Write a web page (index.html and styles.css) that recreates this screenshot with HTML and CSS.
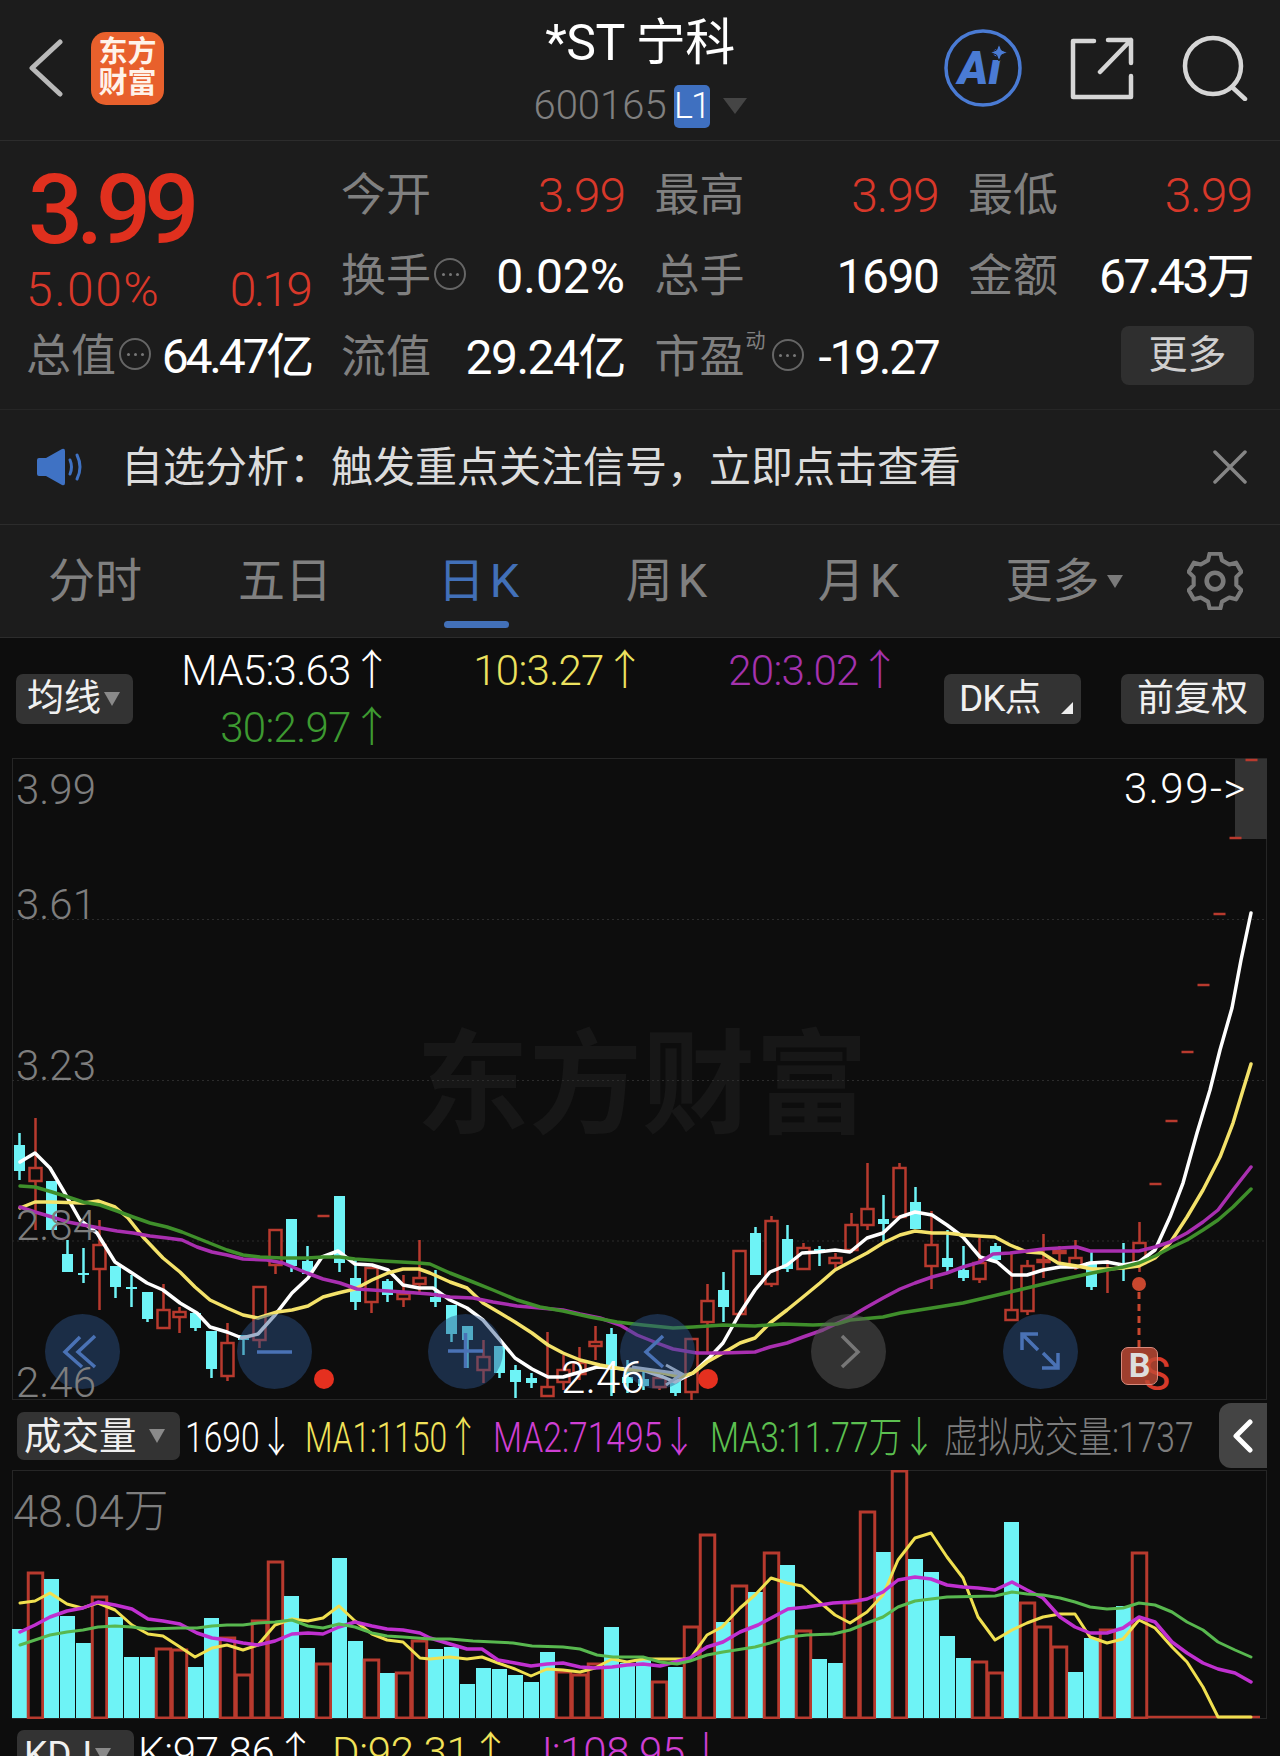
FILE: index.html
```html
<!doctype html>
<html lang="zh-CN">
<head>
    <meta charset="utf-8">
    <meta name="viewport" content="width=device-width, initial-scale=1">
    <title>*ST 宁科 - 日K</title>
    <link rel="stylesheet" href="styles.css">
</head>
<body>
<div class="page">

    <!-- Шапка -->
    <header class="top-bar">
        <div class="top-left">
            <svg class="icon-back" width="34" height="58" viewBox="0 0 34 58"><path d="M31 3 3 29l28 26" fill="none" stroke="#b9b9b9" stroke-width="5" stroke-linecap="round" stroke-linejoin="round"/></svg>
            <div class="logo">东方<br>财富</div>
        </div>
        <div class="top-title">
            <div class="stock-name">*ST 宁科</div>
            <div class="stock-code">600165<span class="badge-l1">L1</span><span class="code-caret"></span></div>
        </div>
        <div class="top-right">
            <svg class="icon-ai" width="78" height="80" viewBox="0 0 78 80">
                <circle cx="39" cy="40" r="37" fill="none" stroke="#4a7bd4" stroke-width="3.5"/>
                <text x="14" y="56" class="ai-text">Ai</text>
                <path d="M55 16l2.500 6 6 2.500-6 2.500-2.500 6-2.500-6-6-2.500 6-2.500z" fill="#4a7bd4" stroke="#1c1c1c" stroke-width="1"/>
            </svg>
            <svg class="icon-share" width="64" height="64" viewBox="0 0 64 64" fill="none" stroke="#d6d6d6" stroke-width="4.500" stroke-linecap="round" stroke-linejoin="round">
                <path d="M24 5H3v56h58V40"/>
                <path d="M30 36 61 4M38 4h23v23"/>
            </svg>
            <svg class="icon-search" width="66" height="66" viewBox="0 0 66 66" fill="none" stroke="#d6d6d6" stroke-width="4.500" stroke-linecap="round">
                <circle cx="31" cy="31" r="28"/>
                <path d="M50 52l13 12"/>
            </svg>
        </div>
    </header>

    <!-- Котировка -->
    <section class="quote">
        <div class="quote-main">
            <div class="price">3.99</div>
            <div class="price-change"><span class="pct">5.00%</span><span class="chg">0.19</span></div>
            <div class="quote-cell">
                <span class="label">总值<i class="info-dot"></i></span><span class="value light tight">64.47亿</span>
            </div>
        </div>
        <div class="quote-grid">
            <div class="quote-cell"><span class="label">今开</span><span class="value red">3.99</span></div>
            <div class="quote-cell"><span class="label">最高</span><span class="value red">3.99</span></div>
            <div class="quote-cell"><span class="label">最低</span><span class="value red">3.99</span></div>
            <div class="quote-cell"><span class="label">换手<i class="info-dot"></i></span><span class="value light wide">0.02%</span></div>
            <div class="quote-cell"><span class="label">总手</span><span class="value light">1690</span></div>
            <div class="quote-cell"><span class="label">金额</span><span class="value light tight">67.43万</span></div>
            <div class="quote-cell"><span class="label">流值</span><span class="value light">29.24亿</span></div>
            <div class="quote-cell"><span class="label">市盈<sup class="label-sup">动</sup><i class="info-dot"></i></span><span class="value light narrow">-19.27</span></div>
            <div class="quote-cell quote-more"><button class="more-btn">更多</button></div>
        </div>
    </section>

    <!-- Уведомление -->
    <section class="notice">
        <svg class="icon-speaker" width="48" height="38" viewBox="0 0 48 38">
            <path d="M0 12q0-2 2-2h7L25 1q3-1 3 2v32q0 3-3 2L9 28H2q-2 0-2-2z" fill="#3f72c4"/>
            <path d="M33 12q3 7 0 14M40 7q6 12 0 24" fill="none" stroke="#3f72c4" stroke-width="3" stroke-linecap="round"/>
        </svg>
        <span class="notice-text">自选分析&#xFF1A;触发重点关注信号&#xFF0C;立即点击查看</span>
        <svg class="icon-close" width="34" height="34" viewBox="0 0 34 34"><path d="M2 2l30 30M32 2 2 32" stroke="#858585" stroke-width="3.500" stroke-linecap="round"/></svg>
    </section>

    <!-- Вкладки периодов -->
    <nav class="tabs">
        <span class="tab">分时</span>
        <span class="tab">五日</span>
        <span class="tab tab-k tab-active">日K</span>
        <span class="tab tab-k">周K</span>
        <span class="tab tab-k">月K</span>
        <span class="tab">更多<i class="tab-caret"></i></span>
        <svg class="icon-gear" width="56" height="58" viewBox="0 0 54 56">
            <path d="M21.800 1.500h10.400l1.600 6.600 7 4 6.600-1.800 5.100 8.900-4.900 4.800v8l4.900 4.800-5.100 8.900-6.600-1.800-7 4-1.600 6.600H21.800l-1.600-6.600-7-4-6.600 1.800-5.100-8.900 4.900-4.800v-8l-4.900-4.800 5.100-8.900 6.600 1.800 7-4z" fill="none" stroke="#7a7a7a" stroke-width="4" stroke-linejoin="round"/>
            <circle cx="27" cy="28" r="8" fill="none" stroke="#7a7a7a" stroke-width="4.500"/>
        </svg>
    </nav>

    <section class="chart-area">
        <!-- Легенда скользящих средних -->
        <div class="ma-bar">
            <div class="ma-left"><span class="chip">均线<i class="chip-caret"></i></span></div>
            <span class="ma-item c-white">MA5:3.63↑</span>
            <span class="ma-item c-yellow">10:3.27↑</span>
            <span class="ma-item c-purple">20:3.02↑</span>
            <div class="ma-right">
                <span class="chip chip-dk">DK点<i class="chip-corner"></i></span>
                <span class="chip chip-adj">前复权</span>
            </div>
            <span class="ma-item c-green">30:2.97↑</span>
        </div>

        <!-- Свечной график -->
        <div class="chart-box chart-main">
            <div class="watermark">东方财富</div>
            <div class="limit-box"></div>
            <svg id="candles" class="chart-svg" viewBox="12 758 1255 642"></svg>
            <div class="zoom-bar">
                <span class="zoom-btn"><svg width="75" height="75" viewBox="0 0 75 75"><path d="M35 23 20 38l17 15M50 22 33 38l17 15"/></svg></span>
                <span class="zoom-btn"><svg width="75" height="75" viewBox="0 0 75 75"><path d="M20 38h35"/></svg></span>
                <span class="zoom-btn"><svg width="75" height="75" viewBox="0 0 75 75"><path d="M20 37h35M37.500 19v35"/></svg></span>
                <span class="zoom-btn"><svg width="75" height="75" viewBox="0 0 75 75"><path d="M43 22 26 38l17 15"/></svg></span>
                <span class="zoom-btn zoom-off"><svg width="75" height="75" viewBox="0 0 75 75"><path d="M31 22l16 16-16 15"/></svg></span>
                <span class="zoom-btn"><svg width="75" height="75" viewBox="0 0 75 75"><path d="M35 36 19 20M19 36V20h16M40 39l15 15M39 54h16V39"/></svg></span>
            </div>
            <span class="axis-label axis-top">3.99</span>
            <span class="axis-label axis-361">3.61</span>
            <span class="axis-label axis-323">3.23</span>
            <span class="axis-label axis-284">2.84</span>
            <span class="axis-label axis-246">2.46</span>
            <span class="price-flag flag-high">3.99-&gt;</span>
            <span class="price-flag flag-low">2.46</span>
            <span class="signal-s">S</span>
            <span class="signal-b">B</span>
        </div>

        <!-- Объём -->
        <div class="indicator-bar">
            <span class="chip chip-vol">成交量<i class="chip-caret"></i></span>
            <span class="ind-item c-white">1690↓</span>
            <span class="ind-item c-yellow2 squeeze">MA1:1150↑</span>
            <span class="ind-item c-pink">MA2:71495↓</span>
            <span class="ind-item c-green2">MA3:11.77万↓</span>
            <span class="ind-item c-gray">虚拟成交量:1737</span>
            <span class="collapse-tab"><svg width="22" height="34" viewBox="0 0 22 34"><path d="M18 3 4 17l14 14" fill="none" stroke="#fff" stroke-width="5" stroke-linecap="round" stroke-linejoin="round"/></svg></span>
        </div>
        <div class="chart-box chart-volume">
            <svg id="volume" class="chart-svg" viewBox="12 1470 1255 249"></svg>
            <span class="axis-label axis-vol">48.04万</span>
        </div>

        <!-- KDJ, срезан краем экрана -->
        <div class="kdj-bar">
            <span class="chip chip-kdj">KDJ<i class="chip-caret"></i></span>
            <span class="kdj-item c-white">K:97.86↑</span>
            <span class="kdj-item c-yellow2">D:92.31↑</span>
            <span class="kdj-item c-pink">J:108.95↓</span>
        </div>
    </section>
</div>
<script src="charts.js"></script>
</body>
</html>
```
FILE: styles.css
```css
/* Общие настройки */
:root {
    --panel-bg: #1c1c1c;
    --chart-bg: #0d0d0d;
    --line: #2c2c2c;
    --gray-text: #808080;
    --red: #d8382a;
    --blue: #4270b8;
}

* {
    box-sizing: border-box;
}

html, body {
    margin: 0;
    padding: 0;
    background: var(--chart-bg);
}

body {
    font-family: Roboto, "Noto Sans CJK SC", sans-serif;
    color: #fff;
}

.page {
    width: 1280px;
    height: 1756px;
    overflow: hidden;
}

/* Шапка */
.top-bar {
    height: 141px;
    display: grid;
    grid-template-columns: 1fr auto 1fr;
    align-items: center;
    background: var(--panel-bg);
    border-bottom: 1px solid var(--line);
}

.top-left {
    display: flex;
    align-items: center;
    gap: 28px;
    padding-left: 29px;
    margin-top: -4px;
}

.logo {
    width: 73px;
    height: 73px;
    padding-top: 5px;
    border-radius: 15px;
    background: #e8602c;
    color: #fff3ea;
    font-size: 29px;
    font-weight: 700;
    line-height: 31px;
    text-align: center;
}

.top-title {
    padding-top: 7px;
    text-align: center;
}

.stock-name {
    font-size: 50px;
    line-height: 56px;
    letter-spacing: -0.5px;
    margin-top: -4px;
}

.stock-code {
    display: flex;
    align-items: center;
    justify-content: center;
    height: 44px;
    margin-top: 13px;
    font-size: 40px;
    font-weight: 300;
    line-height: 44px;
    color: var(--gray-text);
}

.badge-l1 {
    width: 36px;
    height: 43px;
    margin-left: 7px;
    border-radius: 5px;
    background: #3f70c0;
    color: #fff;
    font-size: 36px;
    font-weight: 300;
    line-height: 43px;
    letter-spacing: -2px;
    text-align: center;
}

.code-caret {
    width: 0;
    height: 0;
    margin-left: 13px;
    border-left: 12px solid transparent;
    border-right: 12px solid transparent;
    border-top: 16px solid #454545;
}

.top-right {
    display: flex;
    align-items: center;
    justify-content: flex-end;
    padding-right: 32px;
    margin-top: -5px;
}

.ai-text {
    font-family: Roboto, sans-serif;
    font-size: 46px;
    font-weight: 900;
    font-style: italic;
    fill: #4a7bd4;
}

.icon-share {
    margin-left: 48px;
}

.icon-search {
    margin-left: 48px;
}

/* Котировка */
.quote {
    height: 269px;
    display: flex;
    padding: 22px 0 0 26px;
    background: var(--panel-bg);
    border-bottom: 1px solid #262626;
}

.quote-main {
    width: 284px;
    margin-right: 31px;
}

.price {
    height: 92px;
    margin: 1px 0 0 2px;
    color: #e0301e;
    font-size: 97px;
    font-weight: 500;
    line-height: 92px;
    letter-spacing: -7px;
}

.price-change {
    display: flex;
    justify-content: space-between;
    height: 66px;
    margin: 1px 0 0 0;
    color: var(--red);
    font-size: 48px;
    font-weight: 300;
    line-height: 66px;
}

.pct {
    letter-spacing: 1.500px;
}

.chg {
    letter-spacing: -2.800px;
}

.quote-grid {
    display: grid;
    grid-template-columns: repeat(3, 284px);
    grid-auto-rows: 81px;
    column-gap: 29.500px;
    margin-top: -8px;
}

.quote-cell {
    display: flex;
    align-items: center;
    justify-content: space-between;
    height: 81px;
}

.quote-main .quote-cell {
    margin-top: -7px;
}

.label {
    position: relative;
    display: flex;
    align-items: center;
    color: var(--gray-text);
    font-size: 45px;
    line-height: 56px;
    white-space: nowrap;
}

.label-sup {
    align-self: flex-start;
    margin: -2px 3px 0 1px;
    font-size: 20px;
    line-height: 26px;
}

.info-dot {
    position: relative;
    display: inline-block;
    width: 32px;
    height: 32px;
    margin: -5px 0 0 3px;
    border: 2px solid #666;
    border-radius: 50%;
}

.info-dot::after {
    content: "";
    position: absolute;
    left: 12.500px;
    top: 12.500px;
    width: 3px;
    height: 3px;
    border-radius: 50%;
    background: #777;
    box-shadow: -7px 0 0 #777, 7px 0 0 #777;
}

.value {
    font-size: 48px;
    font-weight: 300;
    line-height: 56px;
    letter-spacing: -1.500px;
    white-space: nowrap;
}

.value.red {
    color: var(--red);
    letter-spacing: -1px;
}

.value.light {
    color: #fff;
    font-weight: 400;
}

.value.tight {
    letter-spacing: -2.600px;
}

.value.narrow {
    letter-spacing: -2.300px;
}

.value.wide {
    letter-spacing: 0;
}

.quote-main .value.tight {
    letter-spacing: -3.200px;
    margin-right: -1px;
}

.quote-more {
    justify-content: flex-end;
}

.more-btn {
    width: 133px;
    height: 59px;
    margin: -4px -2px 0 0;
    padding: 0;
    border: 0;
    border-radius: 8px;
    background: #2f2f2f;
    color: #cfcfcf;
    font-family: inherit;
    font-size: 39px;
    line-height: 59px;
}

/* Уведомление */
.notice {
    height: 115px;
    display: flex;
    align-items: center;
    padding: 0 33px 0 37px;
    background: var(--panel-bg);
    border-bottom: 1px solid var(--line);
}

.notice-text {
    flex: 1;
    margin: 2px 0 0 36px;
    color: #dcdcdc;
    font-size: 42px;
    line-height: 56px;
    white-space: nowrap;
}

/* Вкладки */
.tabs {
    height: 113px;
    display: grid;
    grid-template-columns: 190px 190px 202px 174px 210px 196px auto;
    align-items: center;
    background: var(--panel-bg);
    border-bottom: 1px solid var(--line);
}

.tab {
    position: relative;
    display: flex;
    align-items: center;
    justify-content: center;
    height: 60px;
    color: var(--gray-text);
    font-size: 47px;
    line-height: 60px;
}

.tab-k {
    letter-spacing: 5px;
}

.tab-active {
    color: var(--blue);
}

.tab-active::after {
    content: "";
    position: absolute;
    left: 64px;
    bottom: -17px;
    width: 65px;
    height: 7px;
    border-radius: 4px;
    background: var(--blue);
}

.tab-caret {
    width: 0;
    height: 0;
    margin: 0 0 0 7px;
    border-left: 8px solid transparent;
    border-right: 8px solid transparent;
    border-top: 13px solid #7a7a7a;
}

.icon-gear {
    margin: 0 0 0 25px;
}

/* График: легенда */
.chart-area {
    background: var(--chart-bg);
}

.ma-bar {
    height: 120px;
    padding-top: 4px;
    display: grid;
    grid-template-columns: 132px 260px 253px 255px 1fr;
    grid-template-rows: 57px 57px;
    align-items: center;
}

.ma-left {
    grid-row: span 2;
    padding-left: 16px;
}

.ma-right {
    grid-row: span 2;
    grid-column: 5;
    display: flex;
    justify-content: flex-end;
    gap: 40px;
    padding-right: 16px;
}

.ma-item {
    font-size: 42px;
    font-weight: 300;
    line-height: 50px;
    letter-spacing: -0.700px;
    text-align: right;
    white-space: nowrap;
}

.c-white { color: #fff; }
.c-yellow { color: #ece25f; }
.c-purple { color: #a432ad; }
.c-green { color: #3d9a31; grid-column: 2; grid-row: 2; }
.c-yellow2 { color: #f2e35a; }
.c-pink { color: #cf3fd3; }
.c-green2 { color: #5cc050; }
.c-gray { color: #7d7d7d; }

.chip {
    position: relative;
    display: inline-flex;
    align-items: center;
    height: 50px;
    padding: 0 0 0 11px;
    border-radius: 7px;
    background: #333;
    color: #f0f0f0;
    font-size: 37px;
    line-height: 50px;
    white-space: nowrap;
}

.ma-left .chip {
    width: 117px;
}

.chip-caret {
    width: 0;
    height: 0;
    margin-left: 3px;
    border-left: 8px solid transparent;
    border-right: 8px solid transparent;
    border-top: 14px solid #8a8a8a;
}

.chip-dk {
    width: 137px;
    padding-left: 15px;
    letter-spacing: -1px;
}

.chip-corner {
    position: absolute;
    right: 8px;
    bottom: 10px;
    width: 0;
    height: 0;
    border-left: 12px solid transparent;
    border-bottom: 12px solid #eee;
}

.chip-adj {
    width: 143px;
    justify-content: center;
    padding: 0;
}

/* График: холсты */
.chart-box {
    position: relative;
    width: 1255px;
    margin-left: 12px;
    box-shadow: inset 0 0 0 1px #262626;
}

.chart-main {
    height: 642px;
}

.chart-volume {
    height: 249px;
}

.chart-svg {
    position: absolute;
    inset: 0;
    width: 100%;
    height: 100%;
    display: block;
}

.watermark {
    position: absolute;
    left: 404px;
    top: 268px;
    color: #171717;
    font-size: 113px;
    font-weight: 700;
    line-height: 120px;
    white-space: nowrap;
}

.limit-box {
    position: absolute;
    right: 0;
    top: 1px;
    width: 32px;
    height: 80px;
    background: #333;
}

.axis-label {
    position: absolute;
    left: 4px;
    color: #7e7e7e;
    font-size: 42px;
    font-weight: 300;
    line-height: 42px;
}

.axis-top { top: 11px; }
.axis-361 { top: 126px; }
.axis-323 { top: 287px; }
.axis-284 { top: 447px; }
.axis-246 { top: 604px; }

.axis-vol {
    left: 1px;
    top: 20px;
    font-size: 45px;
    line-height: 44px;
}

.price-flag {
    position: absolute;
    color: #fff;
    font-size: 42px;
    font-weight: 300;
    line-height: 42px;
}

.flag-high {
    left: 1112px;
    top: 10px;
    letter-spacing: 1.500px;
}

.flag-low {
    left: 549px;
    top: 599px;
    font-size: 44px;
}

/* Кнопки поверх графика */
.zoom-bar {
    position: absolute;
    left: 33px;
    top: 556px;
    display: flex;
    gap: 116.600px;
}

.zoom-btn {
    width: 75px;
    height: 75px;
    border-radius: 50%;
    background: rgba(45, 85, 140, 0.45);
}

.zoom-btn svg {
    display: block;
    fill: none;
    stroke: #4a72b5;
    stroke-width: 3.500;
}

.zoom-off {
    background: rgba(90, 90, 90, 0.5);
}

.zoom-off svg {
    stroke: #777;
}

/* Метки сигналов */
.signal-s {
    position: absolute;
    left: 1131px;
    top: 594px;
    color: #d63a2a;
    font-size: 46px;
    line-height: 44px;
}

.signal-b {
    position: absolute;
    left: 1109px;
    top: 589px;
    width: 37px;
    height: 38px;
    border: 1.500px solid #d98a7c;
    border-radius: 7px;
    background: rgba(192, 74, 54, 0.82);
    color: #ddd;
    font-size: 34px;
    font-weight: 700;
    line-height: 35px;
    text-align: center;
}

/* Строки индикаторов */
.indicator-bar {
    position: relative;
    height: 70px;
    display: grid;
    grid-template-columns: 168px 120px 188px 217px 234px 1fr;
    align-items: center;
    padding-left: 17px;
}

.ind-item {
    margin-top: 5px;
    font-size: 42px;
    font-weight: 300;
    line-height: 50px;
    white-space: nowrap;
    /* Цифры в этой строке заметно уже обычных */
    transform: scaleX(0.8);
    transform-origin: left center;
}

.ind-item.squeeze {
    transform: scaleX(0.755);
}

.chip-vol {
    width: 163px;
    height: 48px;
    margin-top: 1px;
    padding-left: 7px;
    font-size: 37.500px;
}

.chip-vol .chip-caret {
    margin-left: 12px;
}

.collapse-tab {
    position: absolute;
    left: 1219px;
    top: 3px;
    width: 48px;
    height: 65px;
    display: flex;
    align-items: center;
    justify-content: center;
    border-radius: 12px 0 0 12px;
    background: #444;
}

.kdj-bar {
    display: grid;
    grid-template-columns: 121px 194px 197px 1fr;
    align-items: start;
    height: 37px;
    margin-top: 11px;
    padding-left: 17px;
    overflow: hidden;
}

.chip-kdj {
    width: 117px;
    padding-left: 7px;
}

.kdj-item {
    font-size: 42px;
    font-weight: 300;
    line-height: 50px;
    letter-spacing: -0.300px;
    white-space: nowrap;
    margin-top: -2px;
}
```
FILE: charts.js
```js
// Рисуем свечи и объём в координатах страницы
var NS = 'http://www.w3.org/2000/svg';
var RED = '#b83a2e';
var CYAN = '#6ef3f6';

function cx(i) {
    return 19.5 + 16 * i;
}

function add(svg, tag, attrs) {
    var el = document.createElementNS(NS, tag);
    for (var k in attrs) el.setAttribute(k, attrs[k]);
    svg.appendChild(el);
    return el;
}

function line(svg, pts, color, width) {
    add(svg, 'polyline', {
        points: pts.join(' '),
        fill: 'none',
        stroke: color,
        'stroke-width': width,
        'stroke-linejoin': 'round',
        'stroke-linecap': 'round'
    });
}

// [1 = красная, верх тени, верх тела, низ тела, низ тени]
var candles = [
    [0,1133,1145,1171,1180],[1,1118,1168,1181,1230],[0,1181,1181,1230,1230],[0,1240,1254,1272,1272],
    [0,1248,1273,1275,1283],[1,1220,1245,1269,1310],[0,1266,1266,1287,1298],[0,1275,1287,1289,1307],
    [0,1292,1292,1319,1322],[1,1284,1310,1328,1328],[1,1307,1312,1317,1333],[0,1312,1313,1328,1331],
    [0,1331,1331,1369,1378],[1,1323,1343,1376,1381],[0,1335,1335,1340,1355],[1,1287,1287,1340,1348],
    [1,1230,1230,1265,1274],[0,1219,1219,1266,1272],[0,1246,1261,1274,1274],[1,1216,1216,1216,1216],
    [0,1196,1196,1263,1272],[0,1258,1278,1302,1310],[1,1268,1268,1302,1313],[0,1279,1281,1295,1302],
    [1,1275,1294,1299,1307],[1,1240,1278,1284,1293],[0,1270,1297,1302,1307],[0,1305,1305,1334,1342],
    [0,1326,1326,1340,1368],[1,1340,1357,1370,1383],[0,1346,1346,1373,1378],[0,1365,1370,1382,1398],
    [0,1373,1378,1383,1388],[1,1332,1387,1396,1396],[1,1355,1370,1382,1390],[1,1347,1363,1374,1380],
    [1,1326,1342,1346,1360],[0,1328,1334,1367,1396],[0,1360,1377,1383,1393],[0,1370,1379,1386,1390],
    [1,1377,1378,1387,1390],[0,1373,1380,1393,1396],[1,1339,1339,1392,1402],[1,1284,1301,1322,1353],
    [0,1272,1290,1307,1322],[1,1251,1251,1314,1314],[0,1227,1233,1275,1275],[1,1216,1221,1284,1287],
    [0,1225,1239,1269,1272],[1,1243,1248,1269,1269],[0,1246,1249,1253,1266],[1,1253,1258,1263,1270],
    [1,1213,1225,1250,1253],[1,1163,1209,1225,1230],[0,1195,1219,1224,1242],[1,1163,1168,1217,1217],
    [0,1187,1202,1229,1229],[1,1211,1245,1266,1289],[0,1230,1258,1267,1272],[0,1246,1270,1278,1281],
    [1,1238,1263,1279,1283],[0,1243,1246,1260,1260],[1,1253,1310,1320,1320],[1,1260,1266,1311,1315],
    [1,1234,1260,1262,1278],[1,1246,1251,1253,1262],[1,1240,1258,1267,1270],[0,1252,1262,1287,1290],
    [1,1260,1262,1262,1293],[0,1243,1264,1266,1281],[1,1222,1243,1263,1272],[1,1184,1184,1184,1184],
    [1,1121,1121,1121,1121],[1,1052,1052,1052,1052],[1,985,985,985,985],[1,914,914,914,914],
    [1,838,838,838,838],[1,760,760,760,760]
];

var ma5 = ['20,1162','35,1153','50,1168','63,1190','80,1220','97,1233','115,1262','132,1273','147,1283','163,1290','180,1303','197,1313','210,1327','227,1332','242,1338','258,1334','275,1315','292,1293','308,1278','322,1257','338,1251','355,1264','372,1265','388,1270','403,1285','419,1288','433,1288','450,1300','467,1308','483,1320','500,1340','515,1358','532,1369','548,1377','563,1377','597,1367','643,1370','663,1377','675,1382','693,1373','710,1357','723,1343','740,1313','755,1290','770,1272','787,1265','802,1253','818,1252','835,1250','850,1252','867,1238','883,1233','900,1217','915,1212','932,1215','947,1225','963,1237','980,1257','997,1262','1012,1275','1027,1275','1043,1270','1060,1267','1077,1267','1090,1263','1107,1262','1123,1265','1139,1262','1155,1250','1170,1217','1183,1183','1197,1133','1210,1090','1220,1050','1232,1008','1241,960','1251,913'];
var ma10 = ['20,1208','35,1202','50,1202','83,1203','98,1201','115,1207','128,1218','143,1237','163,1258','180,1272','195,1287','210,1300','227,1308','243,1315','258,1318','277,1312','292,1310','308,1306','323,1297','338,1293','355,1289','372,1280','388,1273','403,1269','419,1269','430,1273','450,1282','467,1288','483,1303','500,1313','515,1322','532,1333','548,1345','563,1353','580,1360','600,1365','627,1370','643,1370','663,1373','680,1377','693,1373','707,1362','723,1353','740,1343','755,1338','770,1323','787,1310','803,1297','820,1283','835,1270','850,1262','867,1253','883,1243','900,1235','915,1231','932,1233','947,1233','963,1235','978,1236','995,1237','1010,1245','1027,1252','1042,1253','1058,1263','1077,1266','1092,1269','1107,1269','1123,1268','1139,1266','1155,1258','1170,1243','1187,1217','1203,1190','1220,1157','1233,1123','1243,1090','1251,1064'];
var ma20 = ['20,1207','35,1212','52,1217','68,1222','83,1225','100,1228','117,1231','133,1233','150,1236','167,1238','182,1240','197,1247','212,1252','227,1255','243,1259','267,1260','283,1263','307,1273','323,1279','340,1283','357,1289','372,1290','388,1291','403,1292','430,1294','450,1297','473,1298','493,1302','517,1306','540,1308','563,1310','580,1314','600,1318','620,1325','637,1335','657,1343','673,1349','697,1353','723,1353','755,1352','770,1347','787,1343','803,1337','823,1330','840,1322','850,1317','867,1307','883,1298','900,1289','915,1283','932,1277','947,1273','963,1267','980,1262','993,1254','1010,1253','1027,1251','1043,1249','1060,1248','1077,1247','1090,1251','1107,1251','1123,1251','1139,1251','1155,1247','1170,1242','1187,1233','1203,1222','1218,1210','1233,1190','1251,1167'];
var ma30 = ['20,1186','35,1187','52,1192','68,1197','83,1202','100,1205','117,1211','133,1217','150,1223','167,1227','182,1232','197,1238','212,1244','227,1250','243,1255','260,1257','283,1258','307,1258','323,1257','340,1257','355,1259','383,1261','419,1263','430,1264','450,1273','473,1282','493,1290','517,1300','540,1307','563,1311','590,1317','617,1322','643,1325','673,1328','693,1327','723,1325','755,1326','783,1324','813,1325','837,1324','850,1320','883,1317','900,1313','932,1308','963,1303','993,1296','1027,1288','1060,1280','1092,1273','1123,1267','1139,1263','1155,1256','1170,1248','1187,1240','1203,1230','1218,1220','1233,1207','1251,1189'];

function drawCandles() {
    var svg = document.getElementById('candles');
    [919.5, 1080.5, 1241].forEach(function (y) {
        add(svg, 'line', {x1: 12, x2: 1267, y1: y, y2: y, stroke: '#2c2c2c', 'stroke-width': 1, 'stroke-dasharray': '2 3'});
    });
    candles.forEach(function (c, i) {
        var x = cx(i), up = c[0] === 1, color = up ? RED : CYAN;
        if (c[2] === c[3] && c[1] === c[4]) {
            // Цена на лимите: только чёрточка
            add(svg, 'line', {x1: x - 6, x2: x + 6, y1: c[2], y2: c[2], stroke: color, 'stroke-width': 2.5});
        } else if (up) {
            if (c[1] < c[2]) add(svg, 'line', {x1: x, x2: x, y1: c[1], y2: c[2], stroke: color, 'stroke-width': 2.5});
            if (c[4] > c[3]) add(svg, 'line', {x1: x, x2: x, y1: c[3], y2: c[4], stroke: color, 'stroke-width': 2.5});
            add(svg, 'rect', {x: x - 6, y: c[2], width: 12, height: c[3] - c[2], fill: '#0d0d0d', stroke: color, 'stroke-width': 2.5});
        } else {
            add(svg, 'line', {x1: x, x2: x, y1: c[1], y2: c[4], stroke: color, 'stroke-width': 2.5});
            add(svg, 'rect', {x: x - 5.5, y: c[2], width: 11, height: c[3] - c[2], fill: color});
        }
    });
    line(svg, ma5, '#fff', 3.5);
    line(svg, ma10, '#f4e26a', 3.5);
    line(svg, ma20, '#a92fb0', 3.5);
    line(svg, ma30, '#3f8f2b', 3.5);

    // Красные точки и метка покупки
    add(svg, 'circle', {cx: 324, cy: 1379, r: 10, fill: '#e5301f'});
    add(svg, 'circle', {cx: 708, cy: 1379, r: 10, fill: '#e5301f'});
    add(svg, 'circle', {cx: 1139, cy: 1284, r: 7, fill: '#c8472e'});
    add(svg, 'line', {x1: 1139, x2: 1139, y1: 1292, y2: 1347, stroke: '#c8472e', 'stroke-width': 3, 'stroke-dasharray': '7 5'});

    // Стрелка от минимальной цены
    add(svg, 'path', {d: 'M632 1367l50 7M666 1365l16 9-16 11', fill: 'none', stroke: '#d7dbe2', 'stroke-width': 3});
}

// Высоты столбцов объёма: [1 = красный, верх]
var bars = [
    [0,1629],[1,1573],[0,1579],[0,1616],[0,1643],[1,1597],[0,1617],[0,1657],[0,1657],[1,1649],
    [1,1650],[0,1667],[0,1618],[1,1638],[1,1675],[1,1621],[1,1562],[0,1596],[0,1648],[1,1664],
    [0,1558],[0,1641],[1,1660],[0,1673],[1,1673],[1,1641],[0,1649],[0,1647],[0,1684],[0,1668],
    [0,1669],[0,1675],[0,1682],[0,1652],[1,1672],[1,1675],[1,1664],[0,1627],[0,1663],[0,1660],
    [1,1682],[0,1667],[1,1627],[1,1535],[0,1622],[1,1586],[0,1592],[1,1553],[0,1565],[1,1631],
    [0,1659],[0,1663],[1,1603],[1,1512],[0,1552],[1,1471],[0,1559],[0,1572],[0,1636],[0,1658],
    [1,1662],[1,1673],[0,1522],[1,1603],[1,1627],[1,1647],[0,1672],[0,1638],[1,1630],[0,1606],
    [1,1553]
];

var volYellow = ['20,1603','35,1601','50,1593','67,1604','82,1608','98,1603','115,1610','132,1625','148,1634','163,1636','180,1647','195,1657','212,1648','227,1645','243,1650','258,1645','275,1625','292,1619','308,1621','323,1618','339,1606','355,1621','372,1634','387,1640','403,1642','420,1658','430,1659','450,1657','467,1659','482,1657','498,1663','515,1669','531,1676','547,1669','563,1670','580,1672','595,1668','612,1659','627,1662','643,1659','660,1659','690,1659','707,1635','722,1627','740,1608','755,1595','771,1578','787,1583','802,1586','822,1604','835,1615','850,1623','867,1612','883,1595','898,1560','915,1538','931,1533','947,1557','963,1578','978,1617','995,1640','1012,1630','1027,1623','1043,1617','1060,1614','1075,1614','1090,1637','1107,1643','1123,1639','1139,1620','1155,1628','1172,1647','1187,1662','1203,1687','1218,1717','1251,1717'];
var volPink = ['20,1632','35,1625','50,1617','67,1611','83,1608','98,1602','115,1605','132,1609','148,1619','163,1621','180,1624','197,1633','212,1638','227,1640','243,1643','258,1645','275,1641','292,1634','308,1633','323,1634','339,1627','355,1622','372,1626','387,1629','403,1630','420,1633','430,1638','450,1644','467,1649','482,1649','498,1660','515,1663','531,1666','547,1664','563,1663','580,1667','595,1668','612,1667','627,1665','643,1664','660,1666','690,1658','707,1647','723,1642','740,1632','758,1625','773,1617','788,1609','807,1607','833,1603','850,1602','867,1599','883,1592','898,1580','915,1577','931,1579','947,1585','963,1587','978,1588','995,1590','1012,1582','1027,1590','1043,1598','1060,1617','1075,1627','1090,1633','1107,1633','1123,1628','1139,1617','1155,1622','1172,1642','1187,1653','1203,1663','1218,1669','1235,1673','1251,1682'];
var volGreen = ['20,1645','35,1640','50,1635','67,1632','83,1630','98,1627','115,1626','132,1627','148,1629','180,1628','197,1628','212,1626','227,1625','243,1625','258,1623','275,1622','292,1620','308,1626','323,1628','339,1624','355,1627','372,1633','387,1636','403,1637','430,1639','450,1639','473,1641','513,1643','532,1646','563,1647','580,1649','597,1655','613,1657','643,1657','660,1662','677,1664','690,1661','707,1655','723,1652','755,1647','770,1643','788,1637','807,1635','833,1634','850,1630','867,1623','883,1617','898,1607','915,1601','931,1599','947,1597','995,1596','1012,1592','1027,1594','1043,1595','1060,1598','1075,1602','1090,1607','1107,1609','1123,1608','1139,1603','1155,1605','1172,1612','1187,1622','1203,1630','1218,1642','1235,1650','1251,1657'];

function drawVolume() {
    var svg = document.getElementById('volume');
    var bottom = 1718;
    bars.forEach(function (b, i) {
        var x = cx(i), top = b[1];
        if (b[0] === 1) {
            add(svg, 'rect', {x: x - 7.25, y: top, width: 14.5, height: bottom - top, fill: 'none', stroke: RED, 'stroke-width': 3});
        } else {
            add(svg, 'rect', {x: x - 7.5, y: top, width: 15, height: bottom - top, fill: CYAN});
        }
    });
    add(svg, 'line', {x1: 1147, x2: 1260, y1: 1717, y2: 1717, stroke: RED, 'stroke-width': 2.5});
    line(svg, volYellow, '#f0e050', 3);
    line(svg, volPink, '#c030d0', 3.5);
    line(svg, volGreen, '#58b84f', 3);
}

drawCandles();
drawVolume();
```
